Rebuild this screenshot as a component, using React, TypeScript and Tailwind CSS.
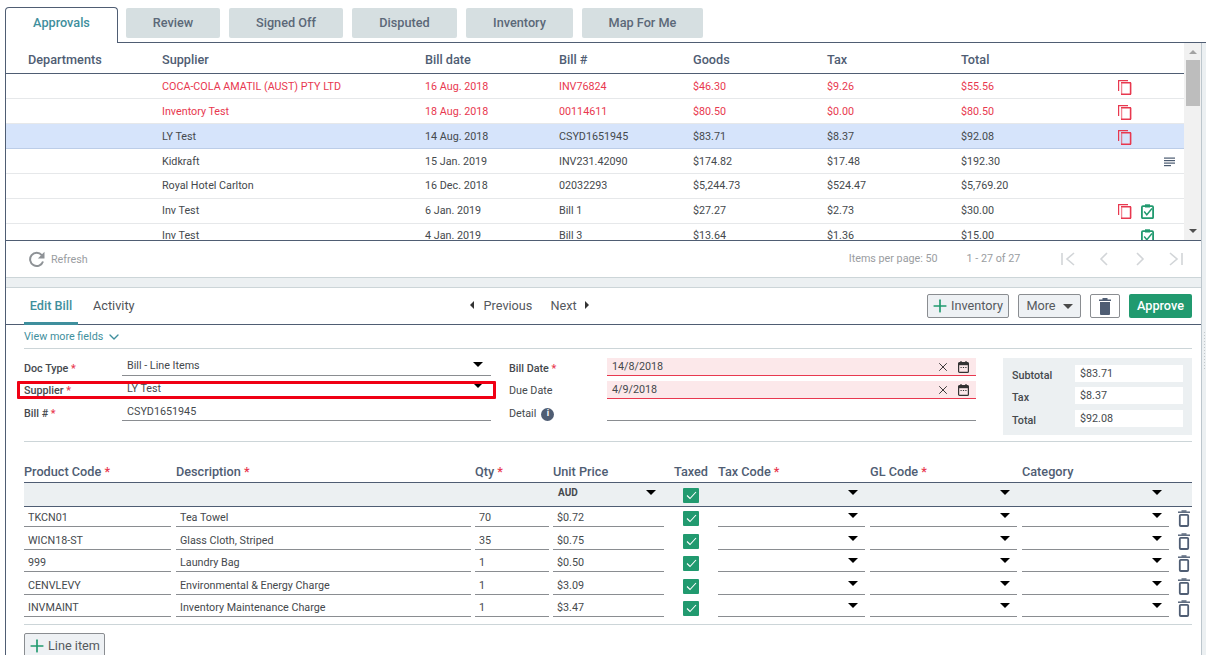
import { ChevronDown, Plus, X } from 'lucide-react';

const TABS = [
  { label: 'Review', w: 'w-[94px]' },
  { label: 'Signed Off', w: 'w-[114px]' },
  { label: 'Disputed', w: 'w-[105px]' },
  { label: 'Inventory', w: 'w-[107px]' },
  { label: 'Map For Me', w: 'w-[121px]' },
];

const BILLS = [
  { s: 'COCA-COLA AMATIL (AUST) PTY LTD', d: '16 Aug. 2018', b: 'INV76824', g: '$46.30', t: '$9.26', tot: '$55.56', red: true, copy: true },
  { s: 'Inventory Test', d: '18 Aug. 2018', b: '00114611', g: '$80.50', t: '$0.00', tot: '$80.50', red: true, copy: true },
  { s: 'LY Test', d: '14 Aug. 2018', b: 'CSYD1651945', g: '$83.71', t: '$8.37', tot: '$92.08', selected: true, copy: true },
  { s: 'Kidkraft', d: '15 Jan. 2019', b: 'INV231.42090', g: '$174.82', t: '$17.48', tot: '$192.30', note: true },
  { s: 'Royal Hotel Carlton', d: '16 Dec. 2018', b: '02032293', g: '$5,244.73', t: '$524.47', tot: '$5,769.20' },
  { s: 'Inv Test', d: '6 Jan. 2019', b: 'Bill 1', g: '$27.27', t: '$2.73', tot: '$30.00', copy: true, check: true },
  { s: 'Inv Test', d: '4 Jan. 2019', b: 'Bill 3', g: '$13.64', t: '$1.36', tot: '$15.00', check: true },
];

const LINES = [
  { code: 'TKCN01', desc: 'Tea Towel', qty: '70', price: '$0.72' },
  { code: 'WICN18-ST', desc: 'Glass Cloth, Striped', qty: '35', price: '$0.75' },
  { code: '999', desc: 'Laundry Bag', qty: '1', price: '$0.50' },
  { code: 'CENVLEVY', desc: 'Environmental & Energy Charge', qty: '1', price: '$3.09' },
  { code: 'INVMAINT', desc: 'Inventory Maintenance Charge', qty: '1', price: '$3.47' },
];

function CopyIcon() {
  return (
    <svg width="14" height="15" viewBox="0 0 14 15" fill="none" stroke="#e8384f">
      <path d="M0.6 11V0.7h9.4" strokeWidth="1.2" />
      <path d="M3.6 14.3V3.3" strokeWidth="1.3" opacity="0.6" />
      <path d="M3 2.8h10M12.6 2.8v11.5M3 14.3h10" strokeWidth="1.6" />
    </svg>
  );
}

function ClipCheckIcon() {
  return (
    <svg width="13" height="15" viewBox="0 0 13 15" fill="none">
      <rect x="0.9" y="2.2" width="11.2" height="12" rx="1" stroke="#219a6f" strokeWidth="1.8" />
      <rect x="4" y="0.3" width="5" height="3.2" fill="#219a6f" />
      <path d="M3.2 7.5l2.6 3.3L11 4.5" stroke="#219a6f" strokeWidth="1.4" />
    </svg>
  );
}

function NoteIcon() {
  return (
    <svg width="11" height="10" viewBox="0 0 11 10" fill="#4a5a70">
      <rect x="0" y="0.5" width="11" height="1.2" />
      <rect x="0" y="3" width="11" height="1.2" />
      <rect x="0" y="5.5" width="11" height="1.2" />
      <rect x="0" y="8" width="7" height="1.2" />
    </svg>
  );
}

function RefreshIcon() {
  return (
    <svg width="18" height="17" viewBox="0 0 18 17" fill="none">
      <path d="M13.8 4.2A6.6 6.6 0 1 0 15 10.5" stroke="#8e9296" strokeWidth="2" />
      <path d="M16.5 0.8v6.6h-6.6z" fill="#8e9296" />
    </svg>
  );
}

function Caret({ className = '' }: { className?: string }) {
  return <span className={`block w-0 h-0 border-x-[5px] border-x-transparent border-t-[5px] border-t-black ${className}`} />;
}

function PagerIcon({ d }: { d: string }) {
  return (
    <svg width="16" height="16" viewBox="0 0 16 16" fill="none" stroke="#d2d5d8" strokeWidth="1.6">
      <path d={d} />
    </svg>
  );
}

function CalendarIcon() {
  return (
    <svg width="11" height="12" viewBox="0 0 11 12" fill="none">
      <rect x="0.6" y="1.6" width="9.8" height="9.8" rx="1" stroke="#333" strokeWidth="1.2" />
      <rect x="0.6" y="1.6" width="9.8" height="2.6" fill="#333" />
      <rect x="2.4" y="0" width="1.2" height="2" fill="#333" />
      <rect x="7.4" y="0" width="1.2" height="2" fill="#333" />
      <path d="M2.5 6.5h1.2M4.9 6.5h1.2M7.3 6.5h1.2" stroke="#333" strokeWidth="1" />
    </svg>
  );
}

function TrashFilled() {
  return (
    <svg width="12" height="17" viewBox="0 0 12 17" fill="#4f5d73">
      <rect x="0" y="1.5" width="12" height="1.5" />
      <rect x="3.5" y="0" width="5" height="2" />
      <path d="M1 4h10v12a1 1 0 0 1-1 1H2a1 1 0 0 1-1-1z" />
    </svg>
  );
}

function TrashOutline() {
  return (
    <svg width="12" height="17" viewBox="0 0 12 17" fill="none" stroke="#4f5d73">
      <path d="M0 2.2h12" strokeWidth="1.4" />
      <path d="M3.5 1h5" strokeWidth="1.4" />
      <rect x="1.8" y="4.8" width="8.4" height="11.2" rx="1" strokeWidth="1.8" />
    </svg>
  );
}

function Check() {
  return (
    <span className="flex items-center justify-center w-4 h-[15px] rounded-[1px] bg-[#219a6f]">
      <svg width="11" height="9" viewBox="0 0 11 9" fill="none" stroke="#fff" strokeWidth="1.1">
        <path d="M1 4.5l3 3L10 1" />
      </svg>
    </span>
  );
}

function Req() {
  return <span className="text-[#e8384f]"> *</span>;
}

function UnderlineCell({ w, ml, children }: { w: string; ml?: string; children?: React.ReactNode }) {
  return (
    <div className={`relative flex items-center h-[20px] border-b border-[#8a8d91] pl-[4px] pt-[4px] ${w} ${ml ?? ''}`}>
      {children}
    </div>
  );
}

function SelectCell({ w, ml }: { w: string; ml: string }) {
  return (
    <UnderlineCell w={w} ml={ml}>
      <Caret className="absolute right-[7px] top-[6px]" />
    </UnderlineCell>
  );
}

export default function App() {
  return (
    <div className="w-[1206px] h-[655px] overflow-hidden bg-white pl-[5px] font-['Roboto',sans-serif] text-[10.75px] text-[#45494d]">
      {/* top tabs */}
      <div className="flex items-end h-[42px] pt-[7px]">
        <div className="relative z-10 flex items-center justify-center w-[113px] h-[36px] -mb-px pb-[5px] bg-white border border-b-0 border-[#4f5d73] rounded-t-[4px] text-[12.7px] font-medium text-[#3f8f9d]">
          Approvals
        </div>
        <div className="flex gap-[9px] ml-[8px] self-start pt-[1px]">
          {TABS.map((tab) => (
            <div key={tab.label} className={`flex items-center justify-center h-[30px] rounded-[2px] bg-[#d6dfe1] text-[12.7px] font-medium text-[#5b6878] ${tab.w}`}>
              {tab.label}
            </div>
          ))}
        </div>
      </div>

      <div className="flex w-[1201px] border-l border-t border-[#4f5d73]">
        <div className="w-[1195px] shrink-0">
          {/* bills table */}
          <div className="flex h-[198px] border-b border-[#4f5d73]">
            <div className="w-[1178px] overflow-hidden">
              <div className="flex items-center h-[31px] pt-[4px] border-b border-[#4f5d73] text-[12.7px] font-medium text-[#4f5d73]">
                <div className="w-[156px] pl-[22px]">Departments</div>
                <div className="w-[263px]">Supplier</div>
                <div className="w-[134px]">Bill date</div>
                <div className="w-[134px]">Bill #</div>
                <div className="w-[134px]">Goods</div>
                <div className="w-[134px]">Tax</div>
                <div className="w-[134px]">Total</div>
              </div>
              {BILLS.map((row, i) => (
                <div
                  key={i}
                  className={`flex items-center h-[25px] shrink-0 border-b ${i < 4 ? 'pt-[2px]' : ''} ${row.selected ? 'bg-[#d6e4fb] border-[#bccde8]' : 'border-[#e6e8ea]'} ${row.red ? 'text-[#e8384f]' : ''}`}
                >
                  <div className="w-[156px]" />
                  <div className="w-[263px]">{row.s}</div>
                  <div className="w-[134px]">{row.d}</div>
                  <div className="w-[134px]">{row.b}</div>
                  <div className="w-[134px]">{row.g}</div>
                  <div className="w-[134px]">{row.t}</div>
                  <div className="w-[157px]">{row.tot}</div>
                  <div className="w-[23px] pt-[1px]">{row.copy && <CopyIcon />}</div>
                  <div className="w-[23px]">{row.check && <ClipCheckIcon />}</div>
                  <div>{row.note && <NoteIcon />}</div>
                </div>
              ))}
            </div>
            {/* scrollbar */}
            <div className="flex flex-col items-center w-[17px] py-[7px] bg-[#f1f1f1]">
              <span className="w-0 h-0 border-x-[4px] border-x-transparent border-b-[4px] border-b-[#a3a3a3]" />
              <div className="w-[14px] h-[46px] mt-[6px] bg-[#bdbdbd]" />
              <span className="w-0 h-0 mt-auto border-x-[4px] border-x-transparent border-t-[4px] border-t-[#505050]" />
            </div>
          </div>

          {/* pager */}
          <div className="flex items-center h-[37px] border-b border-[#ccd5d8] text-[#9a9da1]">
            <div className="ml-[22px]"><RefreshIcon /></div>
            <span className="ml-[5px] pt-[2px]">Refresh</span>
            <span className="ml-[761px]">Items per page: 50</span>
            <span className="ml-[29px]">1 - 27 of 27</span>
            <div className="flex ml-auto mr-[17px] gap-[20px]">
              <PagerIcon d="M2 2v12M14 2L7 8l7 6" />
              <PagerIcon d="M11 2L5 8l6 6" />
              <PagerIcon d="M5 2l6 6-6 6" />
              <PagerIcon d="M2 2l7 6-7 6M14 2v12" />
            </div>
          </div>

          {/* splitter */}
          <div className="flex items-center justify-center h-[10px] bg-[#ecf0f2] border-b border-[#ccd5d8]">
            <div className="w-[28px] h-[4px] bg-[radial-gradient(#c4c9cc_0.6px,transparent_0.7px)] bg-[length:3px_2px]" />
          </div>

          {/* edit header */}
          <div className="flex items-center h-[37px] border-b border-[#4f5d73]">
            <div className="flex items-center justify-center self-stretch w-[54px] ml-[18px] border-b-[3px] border-[#3f8f9d] -mb-px pt-[2px] text-[12.7px] font-medium text-[#3f8f9d]">
              Edit Bill
            </div>
            <span className="ml-[15px] text-[12.7px] text-[#4f5358]">Activity</span>
            <span className="ml-[335px] w-0 h-0 border-y-[4px] border-y-transparent border-r-[4px] border-r-[#333] -mt-[2px]" />
            <span className="ml-[10px] text-[12.7px] text-[#55595e]">Previous</span>
            <span className="ml-[18px] text-[12.7px] text-[#55595e]">Next</span>
            <span className="ml-[8px] w-0 h-0 border-y-[4px] border-y-transparent border-l-[4px] border-l-[#333] -mt-[2px]" />
            <div className="flex items-center gap-[9px] ml-auto mr-[9px]">
              <button className="flex items-center justify-center w-[82px] h-[24px] rounded-[2px] border border-[#8a8d91] bg-[#eef1f4] text-[12.7px] text-[#55595e]">
                <Plus size={20} strokeWidth={2} className="text-[#219a6f] -ml-[3px] mr-[1px]" />
                Inventory
              </button>
              <button className="flex items-center justify-center w-[63px] h-[24px] rounded-[2px] border border-[#8a8d91] bg-[#eef1f4] text-[12.7px] text-[#55595e]">
                More
                <Caret className="ml-[7px] !border-t-[#4a4a4a]" />
              </button>
              <button className="flex items-center justify-center w-[30px] h-[24px] rounded-[2px] border border-[#8a8d91] bg-white">
                <TrashFilled />
              </button>
              <button className="flex items-center justify-center w-[63px] h-[24px] rounded-[2px] bg-[#219a6f] text-[12.7px] font-medium text-white">
                Approve
              </button>
            </div>
          </div>

          {/* edit body */}
          <div className="pl-[18px] pr-[9px]">
            <div className="flex items-center h-[24px] pt-[2px] border-b border-[#ccd5d8] text-[#3f8f9d]">
              View more fields
              <ChevronDown size={16} strokeWidth={2} className="ml-[3px] -mt-[2px]" />
            </div>

            <div className="flex h-[93px] pt-[9px] border-b border-[#ccd5d8]">
              <div className="w-[467px]">
                <div className="flex h-[23px]">
                  <div className="w-[98px] pt-[3px] font-medium">Doc Type<Req /></div>
                  <div className="relative w-[369px] h-[18px] pl-[5px] border-b border-[#8a8d91]">
                    Bill - Line Items
                    <Caret className="absolute right-[8px] top-[4px]" />
                  </div>
                </div>
                <div className="relative flex h-[23px]">
                  <div className="w-[98px] pt-[2px] font-medium">Supplier<Req /></div>
                  <div className="relative w-[369px] h-[18px] pl-[5px]">
                    LY Test
                    <Caret className="absolute right-[8px] top-[2px]" />
                  </div>
                  <div className="absolute -left-[7px] top-0 w-[479px] h-[18px] border-[3px] border-[#f00014] rounded-[1px]" />
                </div>
                <div className="flex h-[23px]">
                  <div className="w-[98px] pt-[2px] font-medium">Bill #<Req /></div>
                  <div className="w-[369px] h-[17px] pl-[5px] border-b border-[#8a8d91]">CSYD1651945</div>
                </div>
              </div>

              <div className="w-[98px] ml-[18px]">
                <div className="h-[23px] pt-[3px] font-medium">Bill Date<Req /></div>
                <div className="h-[23px] pt-[2px]">Due Date</div>
                <div className="flex items-center h-[23px] pb-[3px]">
                  Detail
                  <span className="flex items-center justify-center w-[13px] h-[13px] ml-[5px] rounded-full bg-[#4f5d73] text-[9px] font-bold text-white">i</span>
                </div>
              </div>

              <div className="w-[369px]">
                {['14/8/2018', '4/9/2018'].map((date) => (
                  <div key={date} className="flex items-center h-[18px] mb-[5px] pl-[5px] pr-[7px] pt-[1px] bg-[#fce8ea] border-b border-[#e8384f]">
                    <span className="flex-1">{date}</span>
                    <X size={14} strokeWidth={1.5} className="text-[#222] mr-[8px]" />
                    <CalendarIcon />
                  </div>
                ))}
                <div className="h-[17px] border-b border-[#8a8d91]" />
              </div>

              <div className="flex flex-col w-[189px] h-[77px] ml-[27px] px-[9px] pt-[7px] bg-[#ecf0f2]">
                {[['Subtotal', '$83.71'], ['Tax', '$8.37'], ['Total', '$92.08']].map(([label, value]) => (
                  <div key={label} className="flex h-[22.3px]">
                    <div className="w-[63px] pt-[3px] font-medium">{label}</div>
                    <div className="w-[108px] h-[17px] pl-[5px] pt-[1px] bg-white">{value}</div>
                  </div>
                ))}
              </div>
            </div>

            {/* line items */}
            <div className="flex items-center h-[41px] pt-[20px] border-b border-[#4f5d73] text-[12.7px] font-medium text-[#4f5d73]">
              <div className="w-[152px]">Product Code<Req /></div>
              <div className="w-[299px]">Description<Req /></div>
              <div className="w-[78px]">Qty<Req /></div>
              <div className="w-[121px]">Unit Price</div>
              <div className="w-[44px]">Taxed</div>
              <div className="w-[152px]">Tax Code<Req /></div>
              <div className="w-[152px]">GL Code<Req /></div>
              <div>Category</div>
            </div>
            <div className="relative flex h-[24px] border-b border-[#4f5d73] bg-[#ecf0f2]">
              <div className="relative w-[111px] ml-[529px] pl-[5px] pt-[2px] text-[10px] font-bold">
                AUD
                <Caret className="absolute right-[8px] top-[7px]" />
              </div>
              <div className="ml-[19px] mt-[5px]"><Check /></div>
              <div className="relative w-[147px] ml-[19px]"><Caret className="absolute right-[7px] top-[7px]" /></div>
              <div className="relative w-[147px] ml-[5px]"><Caret className="absolute right-[7px] top-[7px]" /></div>
              <div className="relative w-[147px] ml-[5px]"><Caret className="absolute right-[7px] top-[7px]" /></div>
            </div>
            <div className="pb-[7px] border-b border-[#ccd5d8]">
              {LINES.map((line) => (
                <div key={line.code} className="flex items-end h-[22.5px] first:h-[20px]">
                  <UnderlineCell w="w-[147px]">{line.code}</UnderlineCell>
                  <UnderlineCell w="w-[295px]" ml="ml-[5px]">{line.desc}</UnderlineCell>
                  <UnderlineCell w="w-[74px]" ml="ml-[4px]">{line.qty}</UnderlineCell>
                  <UnderlineCell w="w-[111px]" ml="ml-[4px]">{line.price}</UnderlineCell>
                  <div className="ml-[19px] mb-[1px]"><Check /></div>
                  <SelectCell w="w-[147px]" ml="ml-[19px]" />
                  <SelectCell w="w-[147px]" ml="ml-[5px]" />
                  <SelectCell w="w-[147px]" ml="ml-[5px]" />
                  <div className="ml-[9px]"><TrashOutline /></div>
                </div>
              ))}
            </div>
            <button className="flex items-center w-[81px] h-[26px] mt-[8px] pl-[3px] rounded-[2px] border border-[#8a8d91] bg-[#eef1f4] text-[12.7px] text-[#55595e]">
              <Plus size={20} strokeWidth={2} className="text-[#219a6f] -ml-[1px] mr-[1px]" />
              Line item
            </button>
          </div>
        </div>

        {/* side splitter */}
        <div className="flex items-center justify-center w-[5px] bg-[#ecf0f2] border-l border-[#bcc6cd]">
          <div className="w-[3px] h-[38px] mb-[2px] bg-[radial-gradient(#c4c9cc_0.8px,transparent_0.9px)] bg-[length:3px_3px]" />
        </div>
      </div>
    </div>
  );
}
